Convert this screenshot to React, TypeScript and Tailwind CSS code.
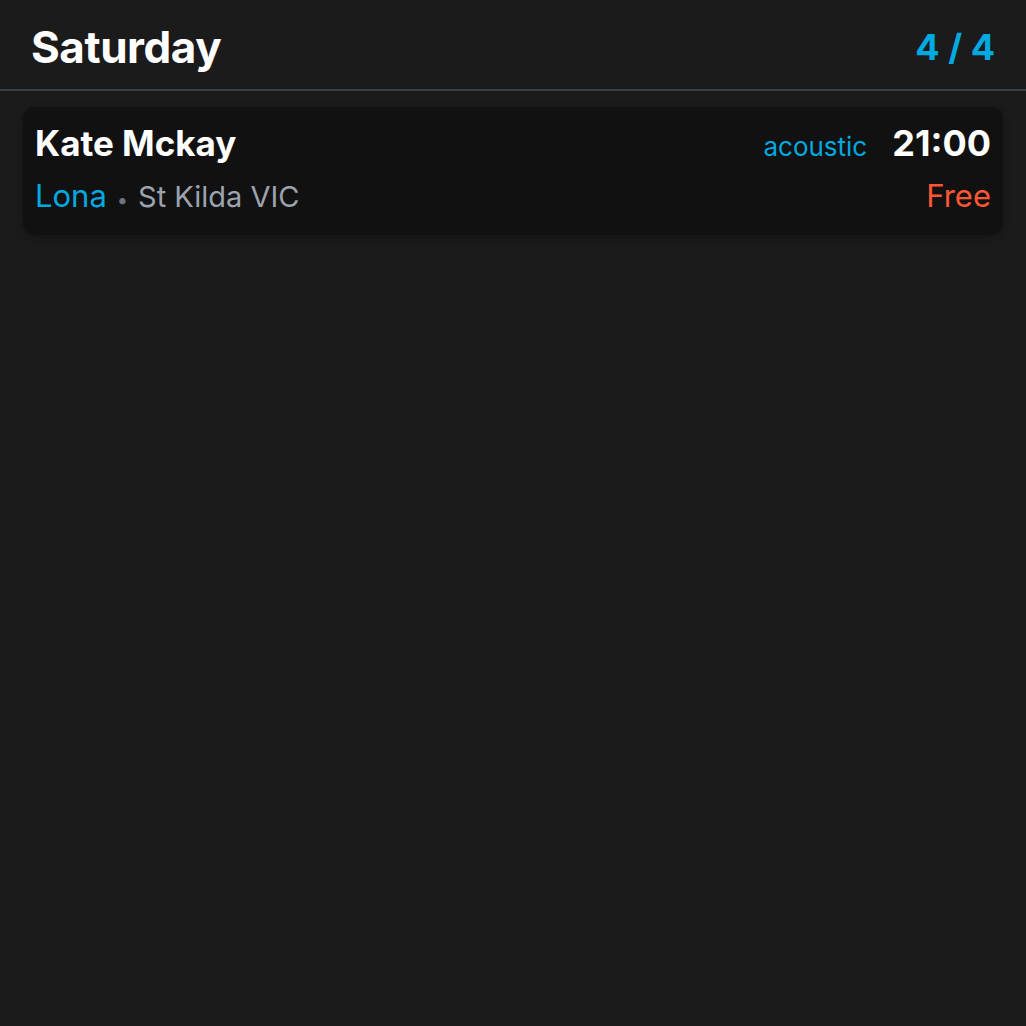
import React from "react";

export default function App() {
  return (
    <div className="min-h-[1026px] w-full bg-[#1b1b1b] font-['Inter',sans-serif]">
      <div className="flex items-center justify-between px-[31px] h-[91px] border-b-2 border-[#3a3f4b]">
        <h1 className="text-[44px] font-bold text-white tracking-[-0.01em] leading-none pt-[5px]">Saturday</h1>
        <div className="text-[36px] font-bold text-[#02a8e0] leading-none pt-[5px]">4 / 4</div>
      </div>
      <div className="px-[23px] pt-[16px]">
        <div className="rounded-[12px] bg-[#111111] px-[12px] pt-[18px] pb-[24px] h-[128px] flex flex-col justify-between shadow-[0_2px_8px_rgba(0,0,0,0.25)]">
          <div className="flex items-baseline justify-between">
            <div className="text-[35px] font-bold text-white leading-none">Kate Mckay</div>
            <div className="flex items-baseline gap-[25px]">
              <span className="text-[26px] text-[#02a8e0] leading-none">acoustic</span>
              <span className="text-[36px] font-bold text-white leading-none">21:00</span>
            </div>
          </div>
          <div className="flex items-baseline justify-between">
            <div className="flex items-baseline leading-none">
              <span className="text-[31px] text-[#02a8e0]">Lona</span>
              <span className="text-[20px] text-[#6b7280] mx-[10px]">•</span>
              <span className="text-[29px] text-[#9ca3af]">St Kilda VIC</span>
            </div>
            <span className="text-[31px] text-[#ff5733] leading-none">Free</span>
          </div>
        </div>
      </div>
    </div>
  );
}
